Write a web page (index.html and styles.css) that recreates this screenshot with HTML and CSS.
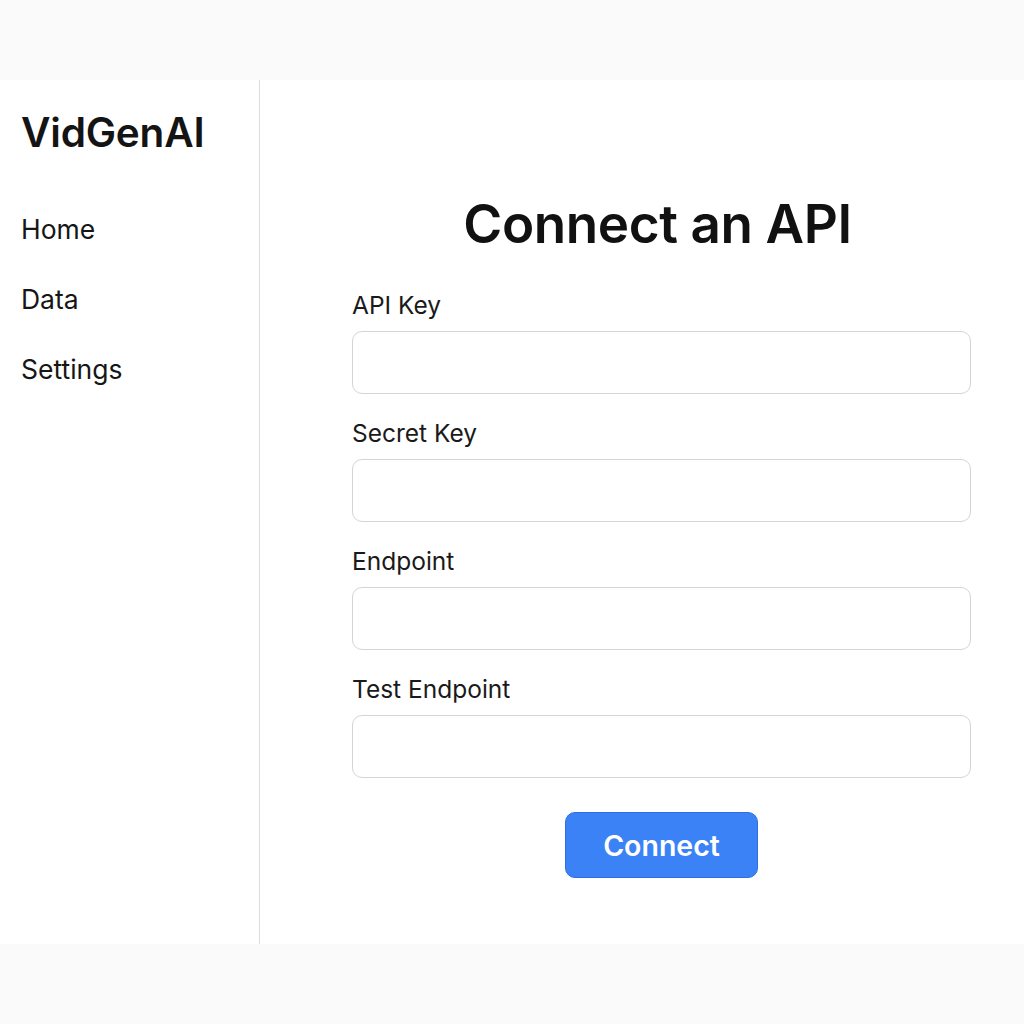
FILE: index.html
```html
<!DOCTYPE html>
<html>
<head>
<meta charset="utf-8">
<link rel="stylesheet" href="styles.css">
</head>
<body>
<div class="band"></div>
<div class="app">
  <aside class="sidebar">
    <div class="logo">VidGenAI</div>
    <nav class="nav">
      <a class="nav-item">Home</a>
      <a class="nav-item">Data</a>
      <a class="nav-item">Settings</a>
    </nav>
  </aside>
  <main class="main">
    <h1 class="title">Connect an API</h1>
    <form class="form">
      <label class="field"><span class="label">API Key</span><input class="input" type="text"></label>
      <label class="field"><span class="label">Secret Key</span><input class="input" type="text"></label>
      <label class="field"><span class="label">Endpoint</span><input class="input" type="text"></label>
      <label class="field"><span class="label">Test Endpoint</span><input class="input" type="text"></label>
      <div class="actions"><button class="btn" type="button">Connect</button></div>
    </form>
  </main>
</div>
<div class="band"></div>
</body>
</html>
```
FILE: styles.css
```css
* { box-sizing: border-box; }
html, body { margin: 0; padding: 0; }
body {
  font-family: Inter, "Noto Sans", sans-serif;
  color: #111;
  background: #fafafa;
}
.band { height: 80px; background: #fafafa; }
.app {
  display: flex;
  height: 864px;
  background: #fff;
}
.sidebar {
  width: 260px;
  border-right: 1px solid #dcdcdc;
  padding: 27px 0 0 21px;
}
.logo {
  font-size: 40.5px;
  font-weight: 600;
  letter-spacing: -0.2px;
  color: #141414;
  line-height: 52px;
}
.nav {
  display: flex;
  flex-direction: column;
  gap: 38px;
  margin-top: 54px;
}
.nav-item {
  font-size: 26.5px;
  line-height: 32px;
  color: #161616;
}
.main {
  flex: 1;
  padding: 112px 0 0 92px;
}
.title {
  margin: 0 0 33px -4px;
  width: 619px;
  text-align: center;
  font-size: 53px;
  font-weight: 600;
  line-height: 64px;
  letter-spacing: -0.4px;
  color: #111;
}
.form {
  width: 619px;
  display: flex;
  flex-direction: column;
  gap: 23px;
}
.field { display: flex; flex-direction: column; gap: 10px; }
.label { font-size: 24.5px; line-height: 32px; color: #1a1a1a; }
.input {
  height: 63px;
  border: 1.5px solid #d4d4d4;
  border-radius: 10px;
  background: #fff;
  font: inherit;
}
.actions { display: flex; justify-content: center; margin-top: 11px; }
.btn {
  width: 193px;
  height: 66px;
  background: #3b82f6;
  border: 1px solid #2f6fe0;
  border-radius: 10px;
  color: #fff;
  font-family: Inter, sans-serif;
  font-size: 28.5px;
  font-weight: 600;
}
```
